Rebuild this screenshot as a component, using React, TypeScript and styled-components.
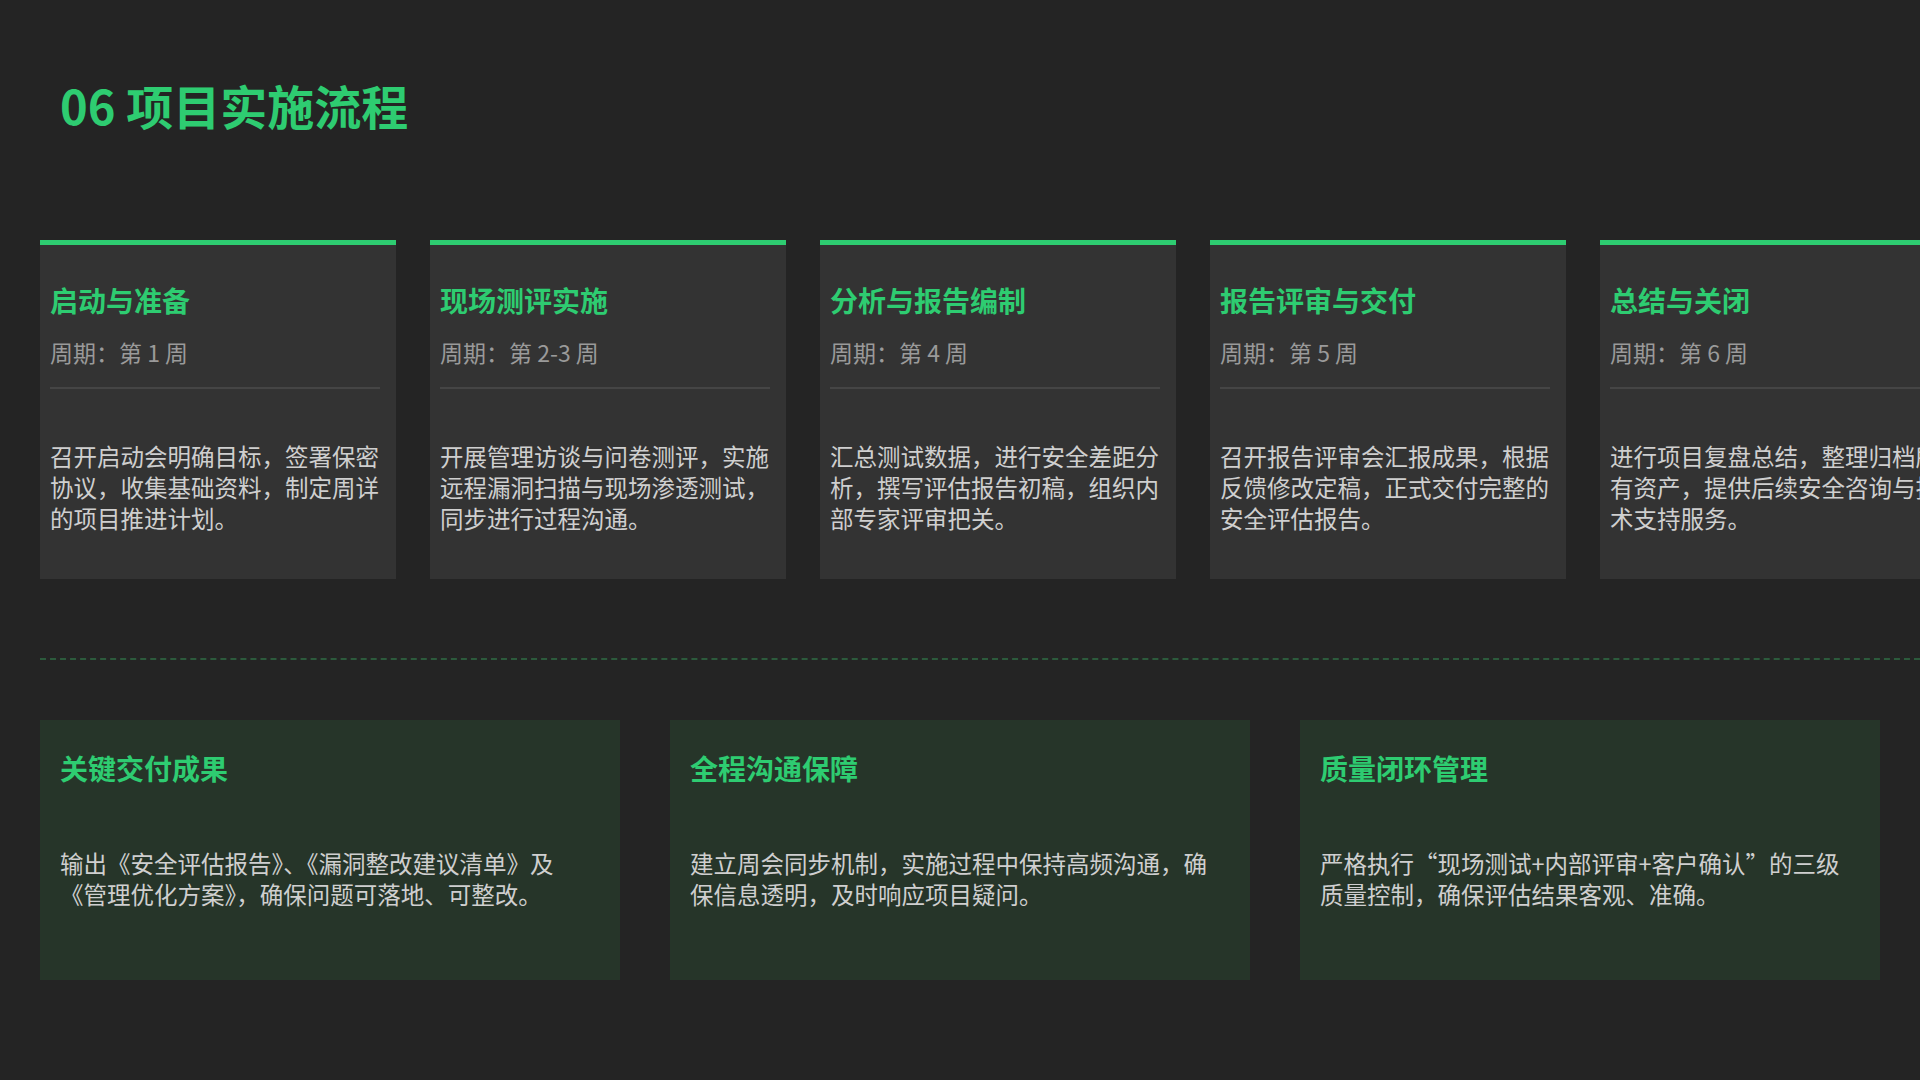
import React from "react";
import styled, { createGlobalStyle } from "styled-components";

const Global = createGlobalStyle`
  html, body { margin: 0; padding: 0; background: #242424; overflow: hidden; }
  body { font-family: "Noto Sans CJK SC", "Noto Sans", sans-serif; }
`;

const Page = styled.div`
  width: 1920px; height: 1080px; box-sizing: border-box;
  padding: 76px 0 0 40px; overflow: hidden; background: #242424;
`;
const Title = styled.h1`
  margin: 0 0 0 20px; font-size: 47px; line-height: 58px; font-weight: 700; color: #2ecc71;
`;
const Steps = styled.div`
  display: flex; gap: 34px; margin-top: 106px; width: 2000px;
`;
const Step = styled.div`
  flex: 0 0 356px; height: 339px; box-sizing: border-box; background: #333333;
  border-top: 5px solid #2ecc71; padding: 37px 16px 0 10px;
`;
const StepTitle = styled.div`
  font-size: 28px; font-weight: 700; color: #2ecc71; line-height: 36px;
`;
const Period = styled.div`
  margin-top: 16px; font-size: 23px; color: #9a9a9a; line-height: 36px;
`;
const Divider = styled.div`
  margin-top: 17px; height: 2px; background: #454545;
`;
const Desc = styled.div`
  margin-top: 52px; font-size: 23.5px; line-height: 31px; color: #cfcfcf; margin-right: -10px;
`;
const Dashed = styled.div`
  margin-top: 79px; border-top: 2px dashed #2c5a3c;
`;
const Features = styled.div`
  display: flex; gap: 50px; margin-top: 60px; padding-right: 40px;
`;
const Feature = styled.div`
  flex: 0 0 580px; height: 260px; box-sizing: border-box; background: #263529;
  padding: 30px 20px 0 20px;
`;
const FeatureTitle = styled.div`
  font-size: 28px; font-weight: 700; color: #2ecc71; line-height: 36px;
`;
const FeatureText = styled.div`
  margin-top: 62px; font-size: 23.5px; line-height: 31px; color: #cfcfcf;
`;

const steps = [
  ["启动与准备", "周期：第 1 周", "召开启动会明确目标，签署保密协议，收集基础资料，制定周详的项目推进计划。"],
  ["现场测评实施", "周期：第 2-3 周", "开展管理访谈与问卷测评，实施远程漏洞扫描与现场渗透测试，同步进行过程沟通。"],
  ["分析与报告编制", "周期：第 4 周", "汇总测试数据，进行安全差距分析，撰写评估报告初稿，组织内部专家评审把关。"],
  ["报告评审与交付", "周期：第 5 周", "召开报告评审会汇报成果，根据反馈修改定稿，正式交付完整的安全评估报告。"],
  ["总结与关闭", "周期：第 6 周", "进行项目复盘总结，整理归档所有资产，提供后续安全咨询与技术支持服务。"],
];
const features = [
  ["关键交付成果", "输出《安全评估报告》、《漏洞整改建议清单》及《管理优化方案》，确保问题可落地、可整改。"],
  ["全程沟通保障", "建立周会同步机制，实施过程中保持高频沟通，确保信息透明，及时响应项目疑问。"],
  ["质量闭环管理", "严格执行“现场测试+内部评审+客户确认”的三级质量控制，确保评估结果客观、准确。"],
];

export default function App() {
  return (
    <Page>
      <Global />
      <Title>06 项目实施流程</Title>
      <Steps>
        {steps.map(([t, p, d]) => (
          <Step key={t}>
            <StepTitle>{t}</StepTitle>
            <Period>{p}</Period>
            <Divider />
            <Desc>{d}</Desc>
          </Step>
        ))}
      </Steps>
      <Dashed />
      <Features>
        {features.map(([t, d]) => (
          <Feature key={t}>
            <FeatureTitle>{t}</FeatureTitle>
            <FeatureText>{d}</FeatureText>
          </Feature>
        ))}
      </Features>
    </Page>
  );
}
